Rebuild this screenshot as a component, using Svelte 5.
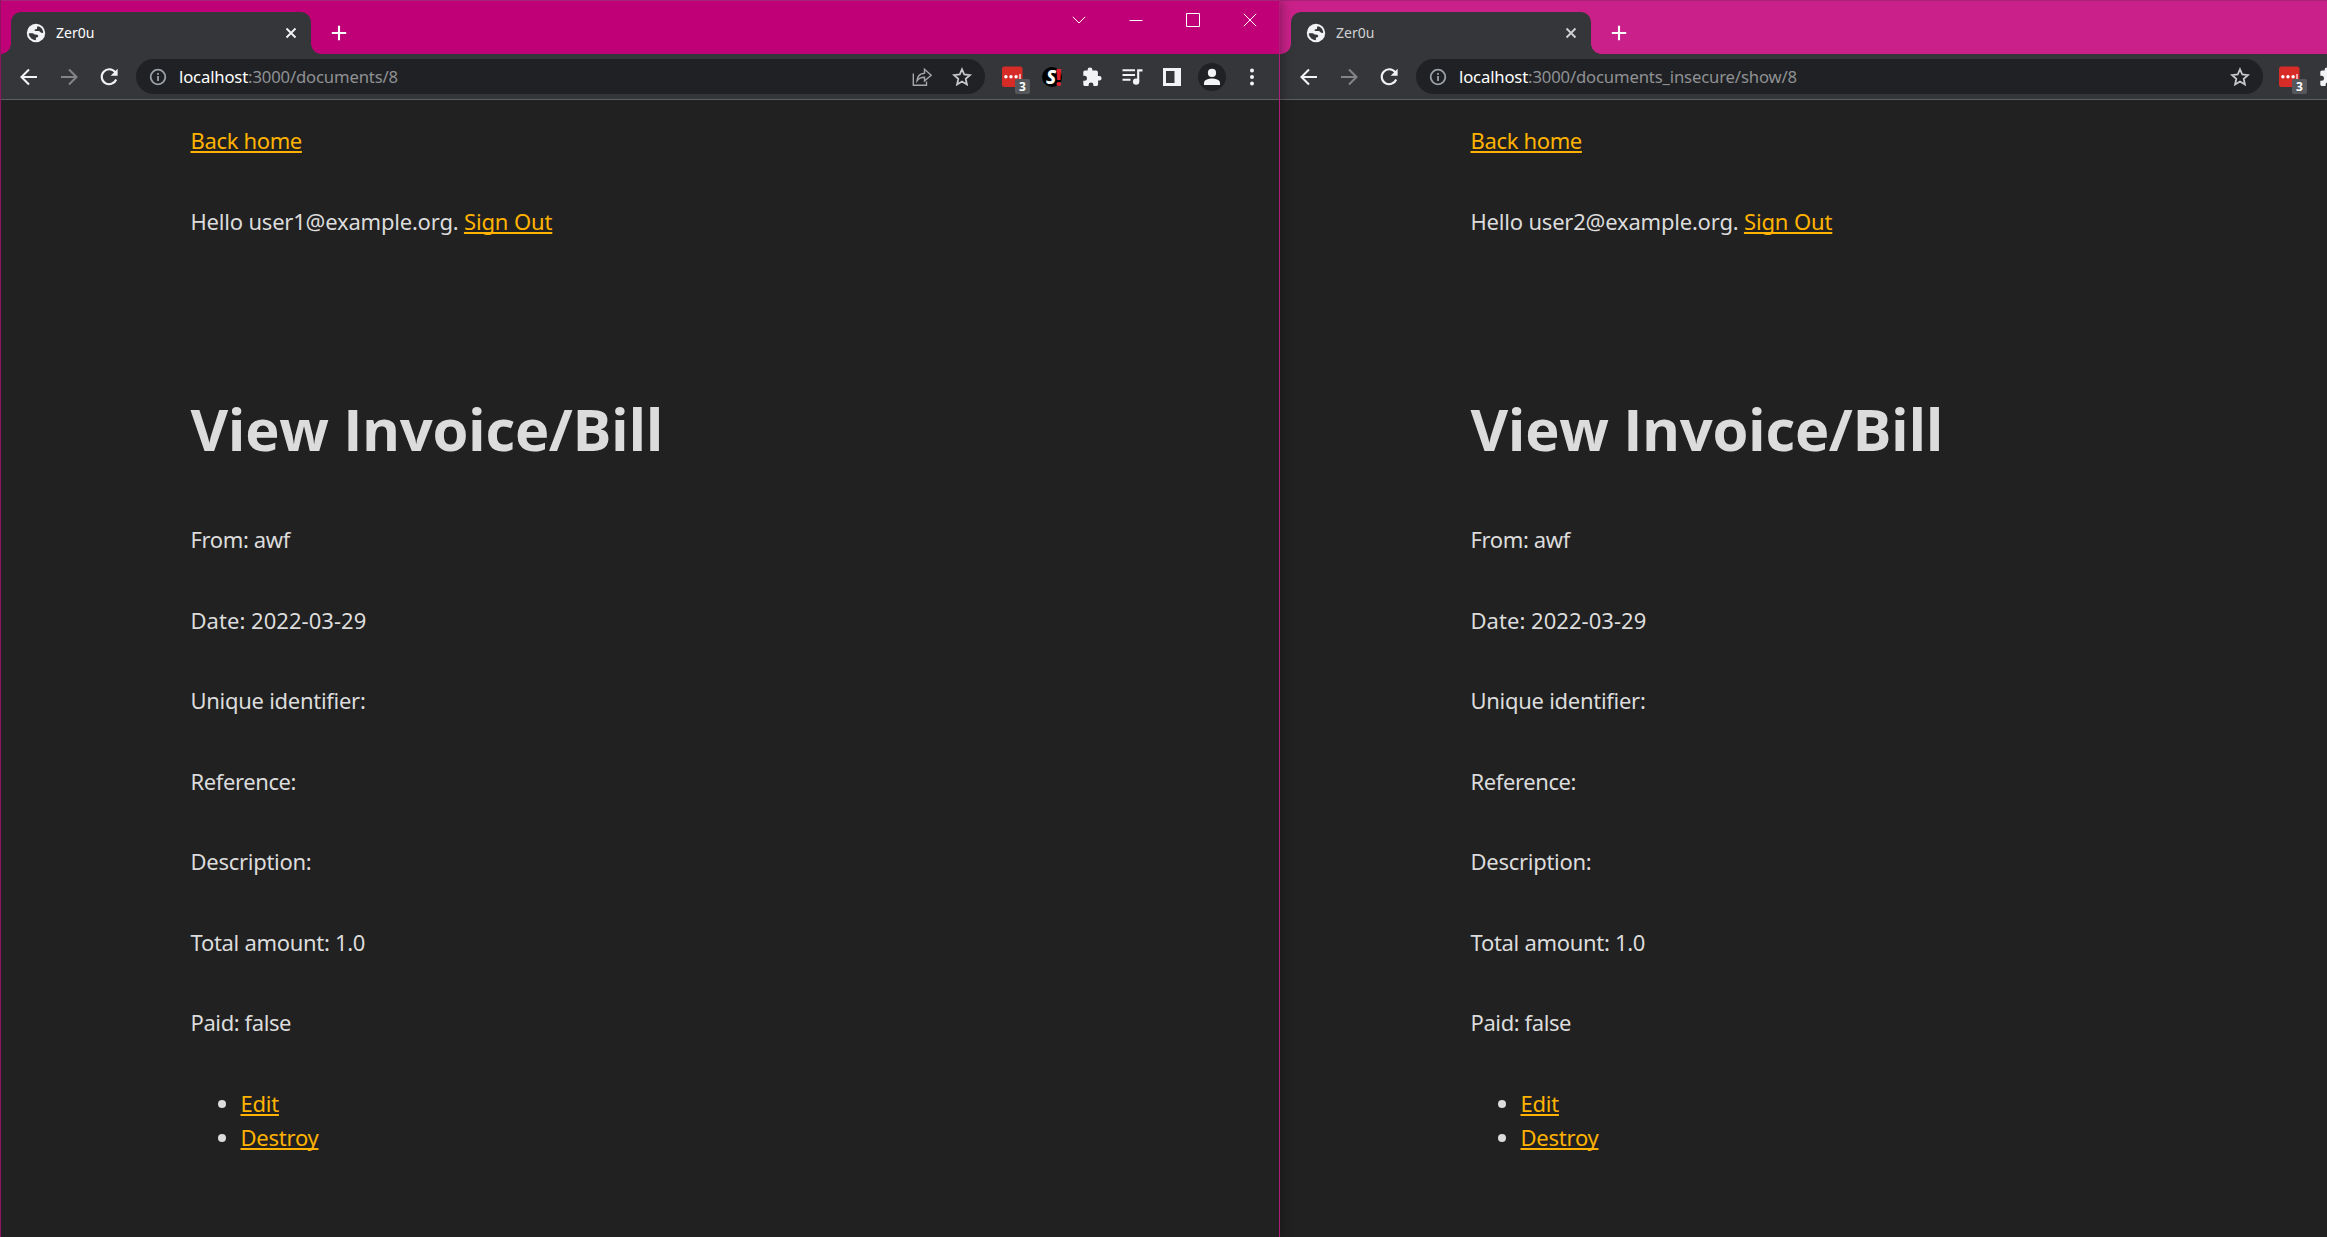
<script>
  const fields = [
    { text: 'From: awf', track: -0.37 },
    { text: 'Date: 2022-03-29', track: 0.04 },
    { text: 'Unique identifier:', track: -0.28 },
    { text: 'Reference:', track: -0.4 },
    { text: 'Description:', track: -0.28 },
    { text: 'Total amount: 1.0', track: -0.3 },
    { text: 'Paid: false', track: -0.4 }
  ];

  const windows = [
    {
      active: true,
      path: ':3000/documents/8',
      user: 'user1@example.org',
      share: true,
      tools: ['dots', 'script', 'puzzle', 'music', 'panel', 'profile', 'menu']
    },
    {
      active: false,
      path: ':3000/documents_insecure/show/8',
      user: 'user2@example.org',
      share: false,
      tools: ['dots', 'puzzle']
    }
  ];
</script>

{#snippet icon(name)}
  {#if name === 'globe'}
    <svg class="globe" viewBox="0 0 20 20">
      <circle cx="10" cy="10" r="9.2" fill="#f1f3f4" />
      <path
        d="M11.6 3.2C15 3.8 17.3 6.6 17.2 10.1L15.3 9.8C14 9.6 14 8.2 12.7 8.1L9.6 8C8.2 8 8.2 6.3 9.5 6.2L11 6V4.4ZM2.8 10.2H6.6C7.8 10.2 8.2 11.5 9.3 11.6L11.2 11.8C12.8 12.1 12.4 14.3 11 14.4H9.9V17.2C6 17 2.9 14 2.8 10.2Z"
        fill="#35363a"
      />
    </svg>
  {:else if name === 'back'}
    <svg viewBox="0 0 24 24"><path d="M20 12H5M12 4.5L4.5 12l7.5 7.5" class="line" /></svg>
  {:else if name === 'forward'}
    <svg viewBox="0 0 24 24"><path d="M4 12h15M12 4.5l7.500 7.500L12 19.500" class="line dim" /></svg>
  {:else if name === 'reload'}
    <svg viewBox="0 0 24 24">
      <path d="M18.200 7.200A7.500 7.500 0 1 0 19.200 14.500" class="line" />
      <path d="M20.600 3.800v7h-7z" fill="#f1f3f4" />
    </svg>
  {:else if name === 'info'}
    <svg viewBox="0 0 24 24">
      <circle cx="12" cy="12" r="7.300" class="line grey" />
      <path d="M12 11v5M12 8v1.800" class="line grey" />
    </svg>
  {:else if name === 'share'}
    <svg viewBox="0 0 24 24">
      <path
        d="M3.300 8.500V20.200H16.500V16.500M7 15.800C7.400 11 10 8.500 14.500 8.200V4.200L21.200 10.200L14.500 16V12.300C11 12.300 8.800 13.300 7 15.800Z"
        class="line thin"
      />
    </svg>
  {:else if name === 'star'}
    <svg viewBox="0 0 24 24">
      <path
        d="M12 4.300L14.300 9.500L19.900 10.100L15.700 13.800L16.900 19.400L12 16.500L7.100 19.400L8.300 13.800L4.100 10.100L9.700 9.500Z"
        class="line light"
      />
    </svg>
  {:else if name === 'dots'}
    <span class="ext">
      <svg viewBox="0 0 24 24">
        <rect x="2" y="1.500" width="20.500" height="20.500" rx="2.500" fill="#d72b28" />
        <circle cx="5.900" cy="11.800" r="1.700" fill="#fff" />
        <circle cx="11" cy="11.800" r="1.700" fill="#fff" />
        <circle cx="16.100" cy="11.800" r="1.700" fill="#fff" />
        <path d="M20 9v5" stroke="#fff" stroke-width="1.200" />
      </svg>
      <b class="badge">3</b>
    </span>
  {:else if name === 'script'}
    <span class="script-icon"><b>S</b><i>!</i></span>
  {:else if name === 'puzzle'}
    <svg viewBox="0 0 24 24">
      <path
        d="M19.300 11h-1.400V7.300c0-1-.8-1.800-1.800-1.800h-3.700V4.800a2.400 2.400 0 0 0-4.800 0v.7H5c-1 0-1.700.8-1.700 1.800v3.500h1.200a2.500 2.500 0 0 1 0 5H3.300v3.400c0 1 .8 1.800 1.800 1.800h3.500v-1.200a2.400 2.400 0 0 1 4.800 0V21h2.900c1 0 1.800-.8 1.800-1.800v-3.600h1.200a2.300 2.300 0 0 0 0-4.600z"
        fill="#f1f3f4"
      />
    </svg>
  {:else if name === 'music'}
    <svg viewBox="0 0 24 24">
      <path d="M2.500 5.300h12.500M2.500 10h12.500M2.500 14.700h8" class="line" />
      <path d="M18.200 16.500V5.400h4.300" class="line" />
      <circle cx="16.100" cy="16.600" r="3.200" fill="#f1f3f4" />
    </svg>
  {:else if name === 'panel'}
    <svg viewBox="0 0 24 24">
      <path fill-rule="evenodd" d="M3 3h18v18H3zM6 6v12h8.500V6z" fill="#f1f3f4" />
    </svg>
  {:else if name === 'profile'}
    <span class="avatar">
      <svg viewBox="0 0 24 24">
        <circle cx="12" cy="7.900" r="4.100" fill="#f1f3f4" />
        <path d="M4 20v-2.300c0-2.700 5.300-4.100 8-4.100s8 1.400 8 4.100V20z" fill="#f1f3f4" />
      </svg>
    </span>
  {:else if name === 'menu'}
    <svg viewBox="0 0 24 24" fill="#f1f3f4">
      <circle cx="12" cy="5.500" r="2" /><circle cx="12" cy="12" r="2" /><circle cx="12" cy="18.500" r="2" />
    </svg>
  {/if}
{/snippet}

<div class="desktop">
  {#each windows as win}
    <section class="window" class:active={win.active}>
      <header class="strip">
        <div class="tab">
          {@render icon('globe')}
          <span class="title">Zer0u</span>
          <svg class="close" viewBox="0 0 12 12"><path d="M1.500 1.500l9 9M10.500 1.500l-9 9" /></svg>
        </div>
        <svg class="plus" viewBox="0 0 16 16"><path d="M8 .8v14.400M.8 8h14.400" /></svg>
        {#if win.active}
          <div class="controls">
            <svg viewBox="0 0 14 14"><path d="M.8 3.800L7 10l6.200-6.200" /></svg>
            <svg viewBox="0 0 14 14"><path d="M.5 7.500h13" /></svg>
            <svg viewBox="0 0 14 14"><path d="M.5 .5h13v13H.5z" /></svg>
            <svg viewBox="0 0 14 14"><path d="M.8 .8l12.400 12.400M13.200 .8L.8 13.200" /></svg>
          </div>
        {/if}
      </header>
      <nav class="toolbar">
        <div class="group">
          {@render icon('back')}
          {@render icon('forward')}
          {@render icon('reload')}
        </div>
        <div class="omnibox">
          {@render icon('info')}
          <span class="url"><span class="host">localhost</span>{win.path}</span>
          <div class="group">
            {#if win.share}{@render icon('share')}{/if}
            {@render icon('star')}
          </div>
        </div>
        <div class="group">
          {#each win.tools as tool}{@render icon(tool)}{/each}
        </div>
      </nav>
      <main>
        <p class="home"><a href="#home">Back home</a></p>
        <p class="hello">Hello {win.user}. <a class="out" href="#out">Sign Out</a></p>
        <h1>View Invoice/Bill</h1>
        {#each fields as field}
          <p style:letter-spacing="{field.track}px">{field.text}</p>
        {/each}
        <ul>
          <li><a href="#edit">Edit</a></li>
          <li><a href="#destroy">Destroy</a></li>
        </ul>
      </main>
    </section>
  {/each}
</div>

<style>
  :global(body) {
    background: #212121;
    overflow: hidden;
  }
  .desktop {
    display: flex;
    width: 2327px;
    height: 1237px;
    overflow: hidden;
    font-family: 'Noto Sans', 'Open Sans', sans-serif;
  }
  .window {
    --frame: #c92189;
    box-sizing: border-box;
    flex: 0 0 1047px;
    height: 1237px;
    background: #212121;
    overflow: hidden;
  }
  .window.active {
    --frame: #bf0077;
    position: relative;
    z-index: 1;
    flex-basis: 1280px;
    border-left: 1px solid #8d1562;
    border-right: 1px solid #b01c79;
    box-shadow: 0 0 12px rgba(0, 0, 0, 0.4);
  }
  .window:not(.active) {
    padding-left: 1px;
    background: linear-gradient(#c92189 54px, #35363a 54px 99px, #5d5e62 99px 100px, #212121 100px);
  }
  .strip {
    box-sizing: border-box;
    display: flex;
    align-items: flex-end;
    height: 54px;
    padding-left: 10px;
    background: var(--frame);
    border-top: 1px solid #a82478;
  }
  .tab {
    position: relative;
    box-sizing: border-box;
    display: flex;
    align-items: center;
    width: 300px;
    height: 42px;
    padding: 0 14px 0 15px;
    border-radius: 10px 10px 0 0;
    background: #35363a;
  }
  .tab::before,
  .tab::after {
    content: '';
    position: absolute;
    bottom: 0;
    width: 10px;
    height: 10px;
  }
  .tab::before {
    right: 100%;
    background: radial-gradient(circle at 0 0, transparent 9.500px, #35363a 10px);
  }
  .tab::after {
    left: 100%;
    background: radial-gradient(circle at 100% 0, transparent 9.500px, #35363a 10px);
  }
  .globe {
    width: 20px;
    height: 20px;
    flex: none;
  }
  .title {
    flex: 1;
    margin-left: 10px;
    font-size: 14px;
    line-height: 20px;
    color: #fff;
  }
  .window:not(.active) .title {
    color: #d0d1d3;
  }
  .close {
    width: 12px;
    height: 12px;
    fill: none;
    stroke: #f1f3f4;
    stroke-width: 1.900;
  }
  .window:not(.active) .close {
    stroke: #cfd0d2;
  }
  .plus {
    width: 16px;
    height: 16px;
    margin: 0 0 13px 20px;
    fill: none;
    stroke: #fff;
    stroke-width: 2.100;
  }
  .controls {
    display: flex;
    align-self: flex-start;
    gap: 43px;
    margin: 12px 22px 0 auto;
  }
  .controls svg {
    width: 14px;
    height: 14px;
    fill: none;
    stroke: #fff;
    stroke-width: 1;
  }
  .toolbar {
    box-sizing: border-box;
    display: flex;
    align-items: center;
    height: 46px;
    padding-left: 16px;
    background: #35363a;
    border-bottom: 1px solid #5d5e62;
  }
  .group {
    display: flex;
    gap: 16px;
    flex: none;
  }
  .toolbar :global(svg) {
    display: block;
    width: 24px;
    height: 24px;
    flex: none;
  }
  .line {
    fill: none;
    stroke: #f1f3f4;
    stroke-width: 2.100;
  }
  .line.dim {
    stroke: #838487;
  }
  .line.grey {
    stroke: #9aa0a6;
    stroke-width: 1.800;
  }
  .line.thin {
    stroke: #a5a7aa;
    stroke-width: 1.400;
  }
  .line.light {
    stroke: #c6c8cb;
    stroke-width: 1.800;
  }
  .omnibox {
    box-sizing: border-box;
    display: flex;
    align-items: center;
    flex: none;
    width: 849px;
    height: 35px;
    margin: 0 15px;
    padding: 0 11px 0 10px;
    border-radius: 18px;
    background: #202124;
  }
  .window:not(.active) .omnibox {
    width: 847px;
    margin-right: 14px;
  }
  .url {
    flex: 1;
    margin-left: 9px;
    font-size: 16.700px;
    line-height: 24px;
    letter-spacing: -0.16px;
    color: #8f9194;
  }
  .host {
    color: #fff;
  }
  .ext {
    position: relative;
    width: 24px;
    height: 24px;
  }
  .badge {
    position: absolute;
    left: 15px;
    top: 14px;
    width: 15px;
    height: 15px;
    border-radius: 2px;
    background: #55575a;
    color: #fff;
    font-size: 12px;
    line-height: 15px;
    text-align: center;
  }
  .script-icon {
    display: flex;
    align-items: center;
    justify-content: center;
    box-sizing: border-box;
    width: 20px;
    height: 20px;
    margin: 2px;
    padding-left: 4px;
    border-radius: 50%;
    background: #000;
    color: #fff;
    font-size: 19px;
    font-style: italic;
    line-height: 20px;
  }
  .script-icon b {
    font-weight: 800;
  }
  .script-icon i {
    color: #e3202b;
    font-size: 23px;
    font-weight: 800;
    font-style: normal;
    margin-left: -1px;
  }
  .avatar {
    display: flex;
    align-items: center;
    justify-content: center;
    width: 28px;
    height: 28px;
    margin: -2px;
    border-radius: 50%;
    background: #202124;
  }
  main {
    padding: 23px 0 0 189.500px;
    color: #dcdcdc;
    font-size: 22px;
    line-height: 34.500px;
  }
  p {
    margin: 0 0 46px;
  }
  a {
    color: #ffb300;
    text-decoration: underline;
    text-decoration-thickness: 2px;
    text-underline-offset: 2px;
    text-decoration-skip-ink: none;
  }
  .home {
    letter-spacing: -0.35px;
  }
  .hello {
    margin-bottom: 158px;
    letter-spacing: -0.2px;
  }
  .out {
    letter-spacing: -0.12px;
  }
  h1 {
    margin: 0 0 60px;
    font-family: 'Open Sans', 'Noto Sans', sans-serif;
    font-size: 58px;
    font-weight: 700;
    line-height: 66px;
    letter-spacing: -0.34px;
  }
  ul {
    margin: 0;
    padding-left: 50px;
  }
  li {
    line-height: 34.500px;
    letter-spacing: -0.24px;
  }
</style>
